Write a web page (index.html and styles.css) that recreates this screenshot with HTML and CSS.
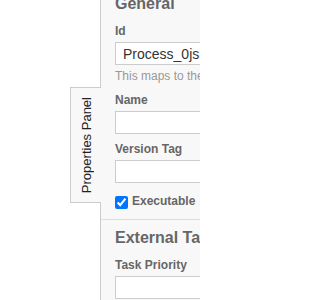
FILE: index.html
```html
<!DOCTYPE html>
<html lang="en">
<head>
<meta charset="utf-8">
<title>Properties Panel</title>
<link rel="stylesheet" href="styles.css">
</head>
<body>
<div class="panel">
  <div class="toggle"><span class="toggle-label">Properties Panel</span></div>
  <div class="panel-body">
    <div class="group group-first">
      <div class="group-label">General</div>
      <div class="entry entry-described">
        <label class="label" for="id">Id</label>
        <input class="input" id="id" type="text" value="Process_0jsn4lb">
        <div class="description">This maps to the process definition key.</div>
      </div>
      <div class="entry">
        <label class="label" for="name">Name</label>
        <input class="input" id="name" type="text" value="">
      </div>
      <div class="entry">
        <label class="label" for="version">Version Tag</label>
        <input class="input" id="version" type="text" value="">
      </div>
      <div class="entry entry-check">
        <input class="checkbox" id="exec" type="checkbox" checked>
        <label class="label label-inline" for="exec">Executable</label>
      </div>
    </div>
    <div class="group">
      <div class="group-label">External Tasks</div>
      <div class="entry">
        <label class="label" for="prio">Task Priority</label>
        <input class="input" id="prio" type="text" value="">
      </div>
    </div>
  </div>
</div>
</body>
</html>
```

FILE: styles.css
```css
html, body {
  margin: 0;
  padding: 0;
  overflow: hidden;
  background: #ffffff;
}

body {
  font-family: "Liberation Sans", Arial, sans-serif;
  width: 200px;
  height: 300px;
}

.panel {
  position: relative;
  margin-left: 100px;
  width: 99px;
  height: 300px;
  background: #f8f8f8;
  border-left: 1px solid #cccccc;
}

.panel-body {
  height: 100%;
  overflow: hidden;
}

.toggle {
  position: absolute;
  left: -31px;
  top: 87px;
  width: 31px;
  height: 116px;
  box-sizing: border-box;
  background: #f8f8f8;
  border: 1px solid #cccccc;
  border-right: none;
  display: flex;
  align-items: center;
  justify-content: center;
}

.toggle-label {
  writing-mode: vertical-rl;
  transform: rotate(180deg);
  font-size: 13px;
  color: #222222;
  white-space: nowrap;
}

.group {
  padding: 7.5px 0 0 14px;
  border-top: 1px solid #dddddd;
}

.group-first {
  border-top: none;
  padding-top: 0;
  padding-bottom: 10px;
  margin-top: -6px;
}

.group-label {
  font-size: 16px;
  line-height: 20px;
  font-weight: bold;
  color: #666666;
  margin-bottom: 10px;
  white-space: nowrap;
}

.entry {
  margin-bottom: 8px;
}

.entry-described {
  margin-bottom: 10px;
}

.label {
  display: block;
  font-size: 12px;
  line-height: 14px;
  font-weight: bold;
  color: #666666;
  margin-bottom: 4px;
  white-space: nowrap;
}

.input {
  display: block;
  box-sizing: border-box;
  width: 260px;
  height: 23px;
  margin: 0;
  padding: 0 7px;
  border: 1px solid #cccccc;
  border-radius: 0;
  background: #ffffff;
  font-family: "Liberation Sans", Arial, sans-serif;
  font-size: 14px;
  color: #333333;
  outline: none;
}

.description {
  margin-top: 4px;
  font-size: 12px;
  line-height: 14px;
  color: #999999;
  white-space: nowrap;
}

.entry-check {
  display: flex;
  align-items: flex-start;
  padding-top: 3px;
  margin-bottom: 0;
}

.checkbox {
  width: 13px;
  height: 13px;
  margin: 2px 4px 0 0;
}

.label-inline {
  margin-bottom: 0;
}
```
